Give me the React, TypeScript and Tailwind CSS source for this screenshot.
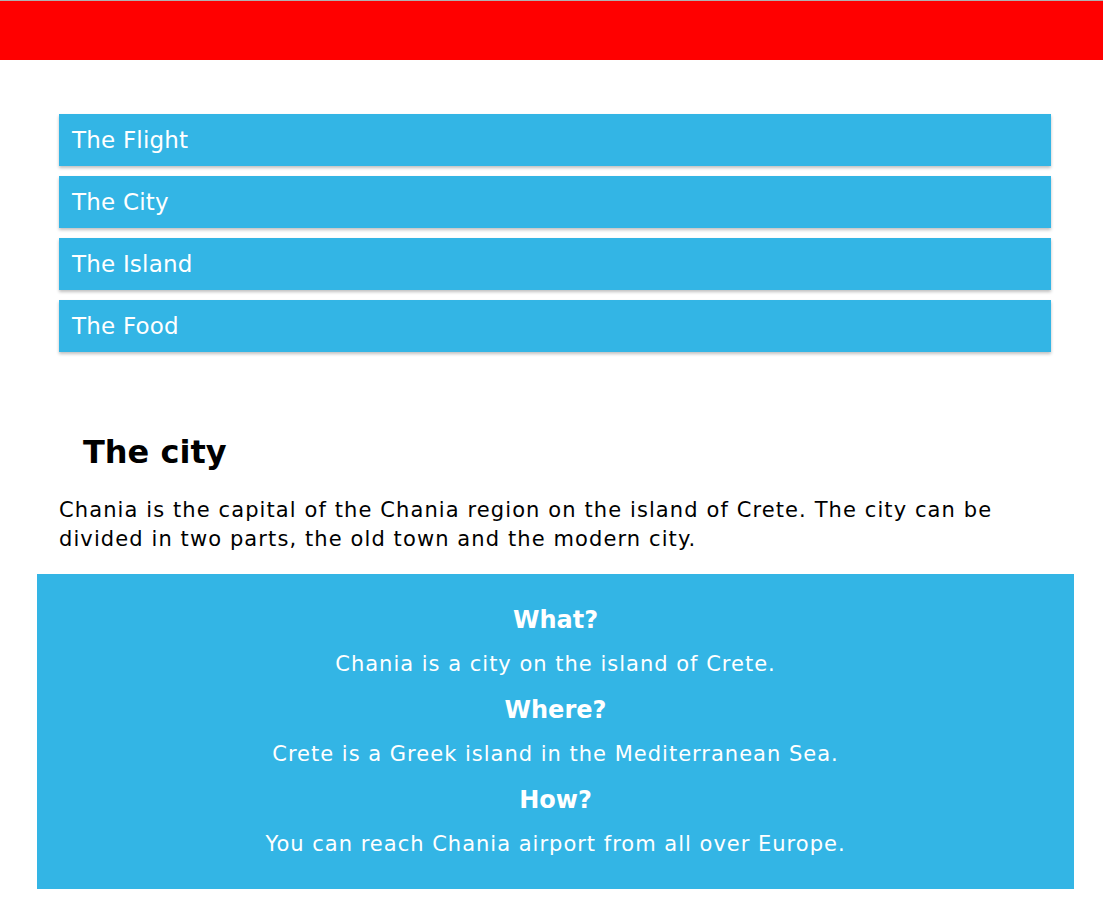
import React from 'react';

const sections = ['The Flight', 'The City', 'The Island', 'The Food'];

const facts = [
    { q: 'What?', a: 'Chania is a city on the island of Crete.' },
    { q: 'Where?', a: 'Crete is a Greek island in the Mediterranean Sea.' },
    { q: 'How?', a: 'You can reach Chania airport from all over Europe.' },
];

const App: React.FC = () => {
    return (
        <div className="min-h-screen bg-white font-['DejaVu_Sans',sans-serif] border-t border-[#b0b0b0]">
            <header className="h-[59px] bg-[#ff0000]" />

            <main className="px-[59px] pt-[54px]">
                <div className="flex flex-col gap-[10px]">
                    {sections.map((s) => (
                        <button
                            key={s}
                            className="h-[52px] w-[992px] bg-[#33b5e5] text-white text-left px-[13px] text-[23px] tracking-[0.2px] shadow-[0_2px_3px_rgba(0,0,0,0.25)]"
                        >
                            {s}
                        </button>
                    ))}
                </div>

                <h2 className="mt-[80px] ml-[24px] text-[32px] font-bold text-black leading-tight">The city</h2>
                <p className="mt-[24px] text-[21px] leading-[29px] tracking-[1.1px] text-black w-[992px]">
                    Chania is the capital of the Chania region on the island of Crete. The city can be divided in two parts, the old town and the modern city.
                </p>
            </main>

            <section className="mx-[37px] mt-[20px] w-[1037px] bg-[#33b5e5] text-white text-center pt-[29px] pb-[16px]">
                {facts.map((f) => (
                    <div key={f.q}>
                        <h3 className="text-[24px] font-bold leading-[34px]">{f.q}</h3>
                        <p className="mt-[10px] mb-[12px] text-[21px] leading-[34px] tracking-[1px]">{f.a}</p>
                    </div>
                ))}
            </section>
        </div>
    );
};

export default App;
